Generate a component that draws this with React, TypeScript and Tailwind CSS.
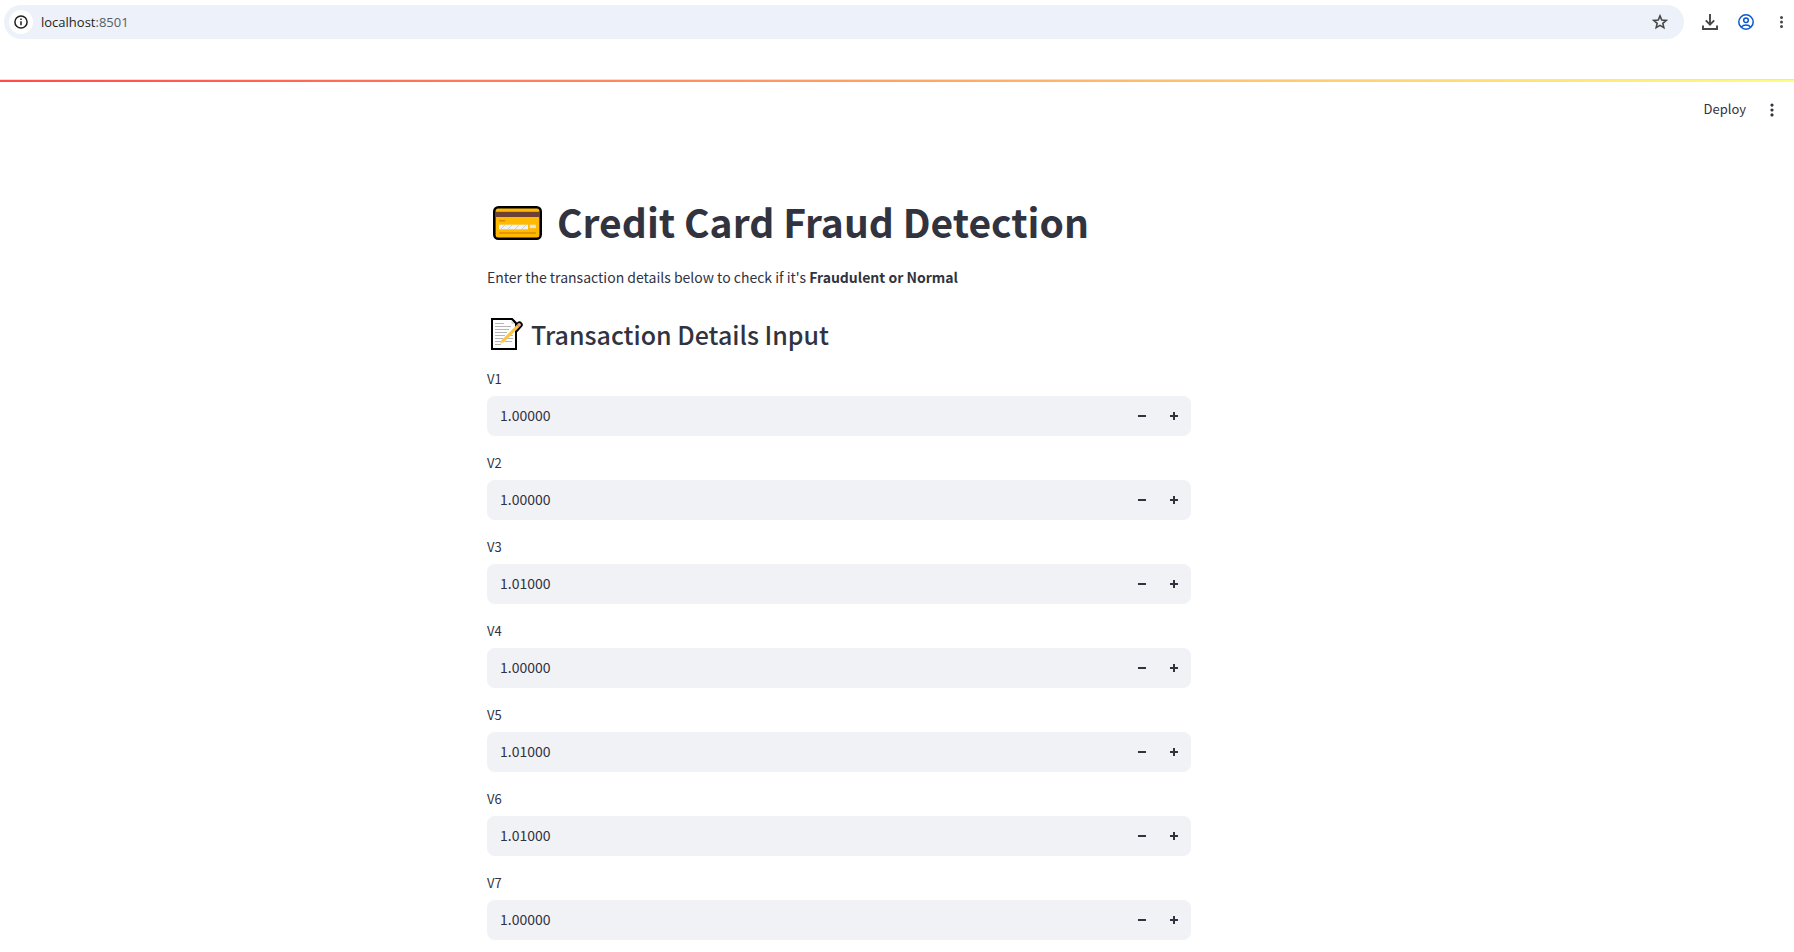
import { useState } from "react";

const INITIAL_VALUES: Record<string, number> = {
  V1: 1,
  V2: 1,
  V3: 1.01,
  V4: 1,
  V5: 1.01,
  V6: 1.01,
  V7: 1,
};

const STEP = 0.01;

function KebabIcon({ className }: { className: string }) {
  return (
    <svg viewBox="0 0 6 18" className={className} fill="currentColor" aria-hidden="true">
      <circle cx="3" cy="3.5" r="1.8" />
      <circle cx="3" cy="9" r="1.8" />
      <circle cx="3" cy="14.5" r="1.8" />
    </svg>
  );
}

function BrowserBar() {
  return (
    <div className="flex h-[79px] items-start pt-[5px] pl-1 pr-[10px]">
      <div className="flex h-[34px] flex-1 items-center rounded-full bg-[#ecf1fa] pl-[5px] pr-4">
        <button
          type="button"
          aria-label="View site information"
          className="flex size-6 items-center justify-center rounded-full bg-white text-[#1f1f1f]"
        >
          <svg viewBox="0 0 14 14" className="size-[14px]" fill="none" stroke="currentColor" aria-hidden="true">
            <circle cx="7" cy="7" r="6.1" strokeWidth="1.5" />
            <path d="M7 6.3v4" strokeWidth="1.5" />
            <path d="M7 3.6v1.5" strokeWidth="1.5" />
          </svg>
        </button>
        <div className="ml-2 flex-1 font-['Open_Sans','Noto_Sans',sans-serif] text-[13px] leading-5 text-[#1f1f1f]">
          <a href="http://localhost:8501">
            localhost<span className="text-[#5a5d63]">:8501</span>
          </a>
        </div>
        <button type="button" aria-label="Bookmark this tab" className="text-[#474747]">
          <svg viewBox="0 0 16 16" className="size-4" fill="none" stroke="currentColor" strokeWidth="1.6" aria-hidden="true">
            <path d="M8 1.9l1.75 4.1 4.45.4-3.38 2.93 1.02 4.35L8 11.35l-3.84 2.33 1.02-4.35L1.8 6.4l4.45-.4z" />
          </svg>
        </button>
      </div>
      <div className="flex h-[34px] items-center pl-[18px] text-[#474747]">
        <button type="button" aria-label="Downloads">
          <svg viewBox="0 0 16 16" className="size-4" fill="none" stroke="currentColor" strokeWidth="1.9" aria-hidden="true">
            <path d="M8 0v10M3.8 6.4L8 10.6l4.2-4.2M1 11.5V15h14v-3.5" />
          </svg>
        </button>
        <button type="button" aria-label="Profile" className="ml-5 text-[#0b57d0]">
          <svg viewBox="0 0 16 16" className="size-4" fill="none" stroke="currentColor" strokeWidth="1.5" aria-hidden="true">
            <circle cx="8" cy="8" r="7.2" />
            <circle cx="8" cy="6.3" r="2.3" />
            <path d="M3.3 13.1C4.5 11.6 6.1 11 8 11s3.5.6 4.7 2.1" />
          </svg>
        </button>
        <button type="button" aria-label="Browser menu" className="ml-[25px]">
          <KebabIcon className="h-4 w-[5px]" />
        </button>
      </div>
    </div>
  );
}

function CardIcon() {
  return (
    <svg viewBox="0 0 49 34" className="h-[34px] w-[49px]" role="img" aria-label="Credit card">
      <rect width="49" height="34" rx="5.5" fill="#000" />
      <rect x="2.6" y="2.6" width="43.8" height="28.8" rx="2.5" fill="#ffb900" />
      <rect x="2.6" y="5.8" width="43.8" height="5.2" fill="#6d4133" />
      <path d="M6 14.8h6.2M6 26.9h37" stroke="#dc8c05" strokeWidth="1.5" />
      <rect x="6" y="18.7" width="29" height="4.6" fill="#f2f2f2" />
      <path d="M8 23l4-4M15 23l4-4M22 23l4-4M29 23l4-4" stroke="#b9d3e2" strokeWidth="1" />
      <rect x="36.8" y="18.7" width="6" height="3.4" fill="#e6e6e6" />
    </svg>
  );
}

function MemoIcon() {
  return (
    <svg viewBox="0 0 32 32" className="size-8" role="img" aria-label="Memo">
      <path d="M0 0h21.5l4.5 4.500V32H0z" fill="#000" />
      <path d="M23 8.500l3-4q2.300-1.900 4.300-.6 2.700 2.300.9 4.700L24.500 16z" fill="#000" />
      <path d="M2 2h18.500l3.500 4v24H2z" fill="#fff" />
      <path d="M20.500 2v4H24z" fill="#d5d5d5" />
      <path
        d="M4 5.500h9M4 8.500h16M4 11.500h14M4 14.500h12M4 17.500h10M4 20.500h8M4 23.500h6M14 23.500h7M4 26.500h6M18 17.500h4M16 20.500h6"
        stroke="#b5b5b5"
        strokeWidth="1"
      />
      <path d="M9.300 25.500l1.200-3.300L26 6.700l2.300 2.300L12.800 24.300z" fill="#ffc53c" />
      <path d="M9.300 25.500l1.200-3.300 2.300 2.100z" fill="#f3cfae" />
      <path d="M26 6.700l1.300-1.400q1.200-.6 2.100.3.900 1 .3 2.100L28.300 9z" fill="#e9a59b" />
    </svg>
  );
}

interface NumberFieldProps {
  name: string;
  value: number;
  onChange: (value: number) => void;
}

function NumberField({ name, value, onChange }: NumberFieldProps) {
  return (
    <div className="flex flex-col">
      <label htmlFor={name} className="h-[29px] text-[13px] leading-6">
        {name}
      </label>
      <div className="flex h-10 overflow-hidden rounded-lg bg-[#f0f2f6]">
        <input
          id={name}
          type="text"
          inputMode="decimal"
          value={value.toFixed(5)}
          onChange={(event) => onChange(Number(event.target.value) || 0)}
          className="min-w-0 flex-1 bg-transparent pb-0.5 pl-[13px] text-sm outline-none"
        />
        <button
          type="button"
          aria-label={`Decrease ${name}`}
          onClick={() => onChange(value - STEP)}
          className="flex w-8 items-center justify-center"
        >
          <svg viewBox="0 0 8 8" className="size-2" fill="currentColor" aria-hidden="true">
            <path d="M0 3h8v2H0z" />
          </svg>
        </button>
        <button
          type="button"
          aria-label={`Increase ${name}`}
          onClick={() => onChange(value + STEP)}
          className="mr-px flex w-8 items-center justify-center"
        >
          <svg viewBox="0 0 8 8" className="size-2" fill="currentColor" aria-hidden="true">
            <path d="M3 0h2v3h3v2H5v3H3V5H0V3h3z" />
          </svg>
        </button>
      </div>
    </div>
  );
}

export default function App() {
  const [values, setValues] = useState(INITIAL_VALUES);

  return (
    <div className="min-h-screen bg-white font-['Noto_Sans_CJK_SC',sans-serif] text-[#31333f]">
      <BrowserBar />
      <div className="h-px bg-[#dfe1e5]" />
      <div className="h-0.5 bg-linear-to-r/srgb from-[#ff4b4b] to-[#fffd80]" />
      <header className="flex h-14 items-center justify-end gap-[23px] pr-[19px]">
        <button type="button" className="pb-0.5 text-[13px] leading-6">
          Deploy
        </button>
        <button type="button" aria-label="Main menu">
          <KebabIcon className="h-4 w-[6px]" />
        </button>
      </header>
      <main className="pr-[116px] pb-3 pt-[58px]">
        <div className="mx-auto max-w-[704px]">
          <h1 className="flex h-[54px] items-center gap-[15px] pl-[6px] text-[39px] leading-[54px] font-bold">
            <CardIcon />
            <span className="pb-1">Credit Card Fraud Detection</span>
          </h1>
          <p className="mt-[15px] text-sm leading-6">
            Enter the transaction details below to check if it's <strong className="font-bold">Fraudulent or Normal</strong>
          </p>
          <h2 className="mt-[27px] flex h-9 items-center gap-2 pl-1 text-[25px] leading-9 font-medium">
            <MemoIcon />
            Transaction Details Input
          </h2>
          <form className="mt-[15px] flex flex-col gap-[15px]">
            {Object.entries(values).map(([name, value]) => (
              <NumberField
                key={name}
                name={name}
                value={value}
                onChange={(next) => setValues((current) => ({ ...current, [name]: next }))}
              />
            ))}
          </form>
        </div>
      </main>
    </div>
  );
}
